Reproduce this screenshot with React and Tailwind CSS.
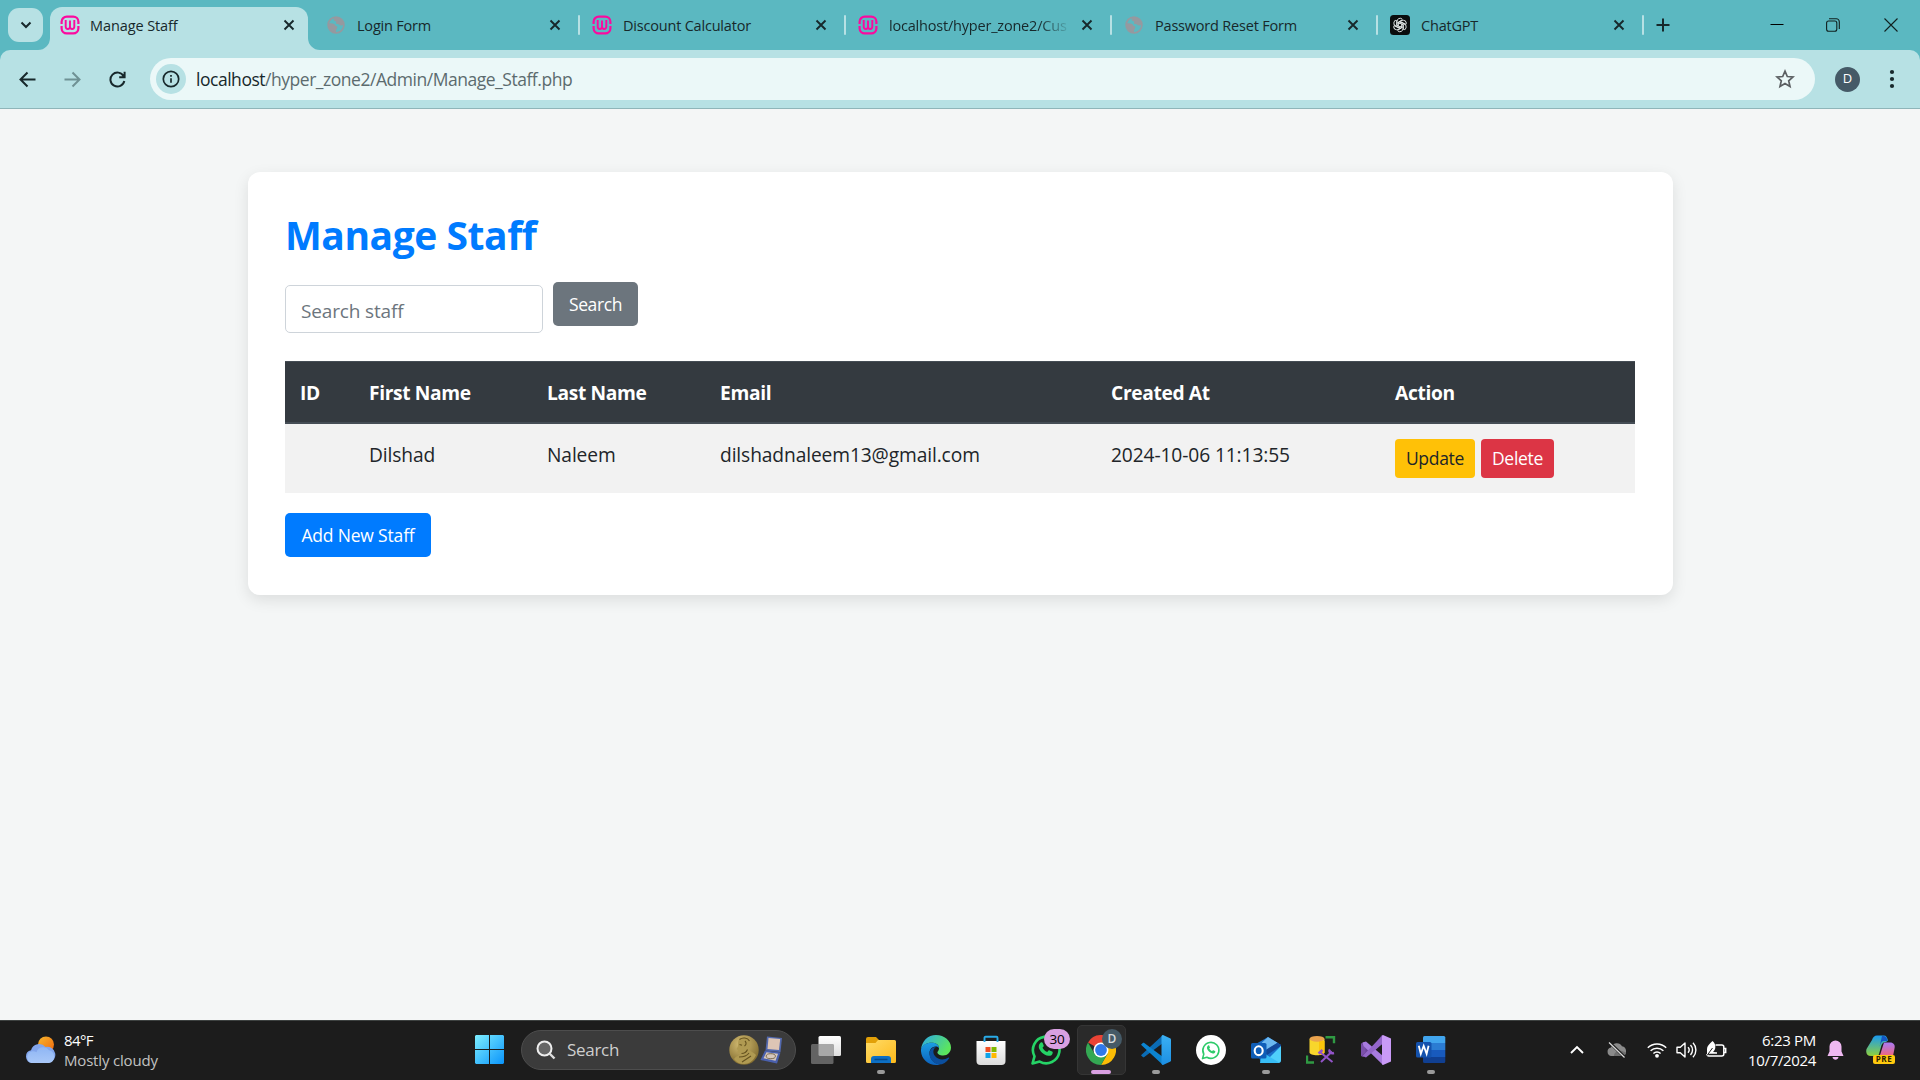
import React from "react";

const Wamp = () => (
  <svg width="20" height="20" viewBox="0 0 20 20" fill="none" stroke="#fb0a9f" className="shrink-0">
    <path d="M1.600 9V6.800A5.200 5.200 0 0 1 6.800 1.600h6.400a5.200 5.200 0 0 1 5.200 5.200V9M1.600 11v2.200a5.200 5.200 0 0 0 5.200 5.200h6.400a5.200 5.200 0 0 0 5.200-5.200V11" strokeWidth="2.200" />
    <path d="M5.700 5v6.800a2.150 2.150 0 0 0 4.300 0V5.500v6.300a2.150 2.150 0 0 0 4.300 0V5" strokeWidth="1.900" />
  </svg>
);

const Globe = () => (
  <svg width="20" height="20" viewBox="0 0 20 20" className="shrink-0">
    <circle cx="10" cy="10" r="7.900" fill="none" stroke="#96999f" strokeWidth="1.700" />
    <path d="M2.500 8.500c2-.3 4-.2 5.500.5 1.200.6.700 1.700 1.900 2 1.300.3 1.800 1.300 1.100 2.200-.7.800-1 1.800-1.100 4.300C5 17.300 1.800 13 2.500 8.500zM8 2.500c4.800-1 8.800 2 9.500 7-.7.900-2 1.200-3.300.7-1.100-.5-1.200-1.400-2.500-1.300-1.500.2-2-.6-1.600-1.500.3-.8-.3-1.200-1.300-1.400-1.200-.2-1.400-2.600-.8-3.500z" fill="#96999f" />
  </svg>
);

const Gpt = () => (
  <svg width="20" height="20" viewBox="0 0 20 20" className="shrink-0">
    <rect width="20" height="20" rx="3.500" fill="#0a0d0e" />
    <g fill="none" stroke="#e4e8e8" strokeWidth=".95" strokeLinejoin="round">
      {[0, 60, 120, 180, 240, 300].map((a) => (
        <path key={a} transform={`rotate(${a} 10 10)`} d="M7 11.200V6.400a3.100 3.100 0 0 1 5.300-2.200M8.300 11V7.200l4.100-2.400" />
      ))}
    </g>
  </svg>
);

const Close = () => (
  <svg width="12" height="12" viewBox="0 0 12 12" stroke="#17282b" strokeWidth="1.900" className="shrink-0">
    <path d="M1.500 1.500l9 9M10.500 1.500l-9 9" />
  </svg>
);

const tabs = [
  { t: "Login Form", I: Globe },
  { t: "Discount Calculator", I: Wamp },
  { t: "localhost/hyper_zone2/Cus", I: Wamp, fade: true },
  { t: "Password Reset Form", I: Globe },
  { t: "ChatGPT", I: Gpt },
];

function TabStrip() {
  return (
    <div className="flex h-[50px] bg-[#5bb8c1] text-[14.500px] tracking-[-0.200px] text-[#17282b]">
      <div className="ml-2 mt-2 flex h-[34px] w-[35px] shrink-0 items-center justify-center rounded-[11px] bg-[#b7e1e4]">
        <svg width="12" height="12" viewBox="0 0 12 12" fill="none" stroke="#17282b" strokeWidth="2">
          <path d="M1.500 3.500L6 8l4.500-4.500" />
        </svg>
      </div>
      <div className="relative ml-[7px] mt-[7px] flex h-[43px] w-[258px] shrink-0 items-center rounded-t-[12px] bg-[#b7e1e4] pb-[7px] pl-[10px] pr-[13px]">
        <svg className="absolute -left-3 bottom-0" width="12" height="12"><path d="M12 0v12H0A12 12 0 0 0 12 0z" fill="#b7e1e4" /></svg>
        <svg className="absolute -right-3 bottom-0" width="12" height="12"><path d="M0 0v12h12A12 12 0 0 1 0 0z" fill="#b7e1e4" /></svg>
        <Wamp />
        <span className="ml-[10px] flex-1 whitespace-nowrap pt-[2px] tracking-[-0.100px]">Manage Staff</span>
        <Close />
      </div>
      <div className="ml-[18px] flex">
        {tabs.map(({ t, I, fade }) => (
          <div key={t} className="flex h-[50px] w-[266px] shrink-0 items-center">
            <I />
            <div className={"ml-[11px] w-[180px] overflow-hidden whitespace-nowrap pt-[2px]" + (fade ? " [mask-image:linear-gradient(to_right,black_150px,transparent_182px)]" : "")}>{t}</div>
            <div className="ml-[12px] flex"><Close /></div>
            <div className="ml-[17px] h-5 w-[2px] rounded bg-[#b7e1e4]" />
          </div>
        ))}
      </div>
      <svg className="mt-[18px] shrink-0" width="14" height="14" viewBox="0 0 14 14" stroke="#17282b" strokeWidth="2"><path d="M7 .5v13M.5 7h13" /></svg>
      <div className="ml-auto mr-[22px] flex shrink-0 items-center">
        <svg className="mr-[42px]" width="14" height="14" viewBox="0 0 14 14" stroke="#000"><path d="M.5 6.500h13" /></svg>
        <svg className="mr-[44px]" width="14" height="14" viewBox="0 0 14 14" fill="none" stroke="#10201f" strokeWidth="1.100"><rect x=".6" y="3" width="10.200" height="10.300" rx="2" /><path d="M3 .8h7.300a3 3 0 0 1 3 3V11" /></svg>
        <svg width="14" height="14" viewBox="0 0 14 14" stroke="#10201f" strokeWidth="1.100"><path d="M.5.5l13 13M13.500.5l-13 13" /></svg>
      </div>
    </div>
  );
}

function Toolbar() {
  return (
    <div className="bg-[#5bb8c1]">
      <div className="flex h-[59px] items-center rounded-t-[10px] border-b border-[#8fb5b9] bg-[#b7e1e4]">
        <svg className="ml-[19px]" width="17" height="17" viewBox="0 0 17 17" fill="none" stroke="#17282b" strokeWidth="2"><path d="M16.500 8.500H2M8.500 1.500l-7 7 7 7" /></svg>
        <svg className="ml-[28px]" width="17" height="17" viewBox="0 0 17 17" fill="none" stroke="#6f9194" strokeWidth="2"><path d="M.5 8.500H15M8.500 1.500l7 7-7 7" /></svg>
        <svg className="ml-[28px]" width="17" height="17" viewBox="0 0 17 17" fill="none" stroke="#17282b" strokeWidth="2"><path d="M14.600 5.200A7 7 0 1 0 15.300 10M15.600.8v5.400h-5.400" /></svg>
        <div className="ml-[24px] flex h-[42px] w-[1665px] items-center rounded-full bg-[#ebf8f8] pl-[6px] pr-[20px]">
          <div className="flex size-[30px] items-center justify-center rounded-full bg-[#b7e1e4]">
            <svg width="18" height="18" viewBox="0 0 18 18" fill="none" stroke="#17282b" strokeWidth="1.700"><circle cx="9" cy="9" r="7.700" /><path d="M9 8.200v4.600M9 5v1.700" /></svg>
          </div>
          <span className="ml-[10px] flex-1 pt-px text-[17.500px] tracking-[-0.470px] text-[#5c6b6e]"><span className="text-[#17282b]">localhost</span>/hyper_zone2/Admin/Manage_Staff.php</span>
          <svg width="20" height="20" viewBox="0 0 20 20" fill="none" stroke="#5b5f62" strokeWidth="1.700"><path d="M10 2.200l2.300 5.300 5.700.5-4.300 3.800 1.300 5.600-5-3-5 3 1.300-5.600L2 8l5.700-.5z" /></svg>
        </div>
        <div className="ml-[20px] flex size-[25px] items-center justify-center rounded-full bg-[#455a67] text-[13px] text-white">D</div>
        <svg className="ml-[29px]" width="6" height="20" viewBox="0 0 6 20" fill="#17282b"><circle cx="3" cy="3" r="2.100" /><circle cx="3" cy="10" r="2.100" /><circle cx="3" cy="17" r="2.100" /></svg>
      </div>
    </div>
  );
}

function Content() {
  return (
    <main className="flex flex-1 justify-center bg-[#f4f6f6] pt-[63px] text-[#212529]">
      <div className="h-[423px] w-[1425px] rounded-[12px] bg-white px-[37.500px] pt-[37.500px] shadow-[0_5px_15px_rgba(0,0,0,0.1)]">
        <h2 className="text-[39px] font-bold leading-[50px] tracking-[-0.450px] text-[#007bff]">Manage Staff</h2>
        <div className="mt-[22px] flex h-[79px] items-start gap-[10px]">
          <input className="mt-[3px] h-[48px] w-[258px] rounded-[5px] border border-[#ced4da] px-[15px] pt-[5px] text-[19px] tracking-[-0.150px] placeholder:text-[#6c757d]" placeholder="Search staff" />
          <button className="h-[44px] w-[85px] rounded-[5px] bg-[#6c757d] pt-px text-[17.500px] tracking-[-0.400px] text-white">Search</button>
        </div>
        <table className="w-full table-fixed text-left text-[19.200px] tracking-[-0.110px]">
          <colgroup>
            <col className="w-[69px]" /><col className="w-[178px]" /><col className="w-[173px]" /><col className="w-[391px]" /><col className="w-[284px]" /><col />
          </colgroup>
          <thead>
            <tr className="h-[62px] border-t border-b-2 border-[#454d55] bg-[#343a40] tracking-[-0.350px] text-white">
              {["ID", "First Name", "Last Name", "Email", "Created At", "Action"].map((h) => (
                <th key={h} className="pl-[15px] pt-[3px] font-bold">{h}</th>
              ))}
            </tr>
          </thead>
          <tbody>
            <tr className="h-[70px] bg-[#f2f2f2] align-top">
              {["", "Dilshad", "Naleem", "dilshadnaleem13@gmail.com", "2024-10-06 11:13:55"].map((c, i) => (
                <td key={i} className="pl-[15px] pt-[17px]">{c}</td>
              ))}
              <td className="pl-[15px] pt-[15px]">
                <div className="flex gap-[6px] text-[17.500px] tracking-[-0.300px]">
                  <button className="h-[39px] w-[80px] rounded-[4px] bg-[#ffc107]">Update</button>
                  <button className="h-[39px] w-[73px] rounded-[4px] bg-[#dc3545] text-white">Delete</button>
                </div>
              </td>
            </tr>
          </tbody>
        </table>
        <button className="mt-[20px] h-[44px] w-[146px] rounded-[5px] bg-[#007bff] text-[17.500px] tracking-[-0.180px] text-white">Add New Staff</button>
      </div>
    </main>
  );
}

const Svg = ({ children, w = 30, h = 30 }) => (
  <svg width={w} height={h} viewBox={`0 0 ${w} ${h}`} fill="none" className="shrink-0">{children}</svg>
);

const Grad = ({ id, a, b, x2 = 0, y2 = 1 }) => (
  <linearGradient id={id} x1="0" y1="0" x2={x2} y2={y2}><stop stopColor={a} /><stop offset="1" stopColor={b} /></linearGradient>
);

const phone = "M9.700 7.600c.5-.6 1.500-.6 1.900.2l1.100 2.600c.2.500 0 1-.4 1.400l-.8.9c1 1.900 2.500 3.300 4.700 4.300l1.100-1.300c.4-.4.800-.5 1.300-.3l2.500 1.200c.6.300.7.700.6 1.300-.4 2-2.200 3.200-4.200 2.900-4.900-.9-9-4.700-9.700-8.600-.2-1.800.6-3.500 1.900-4.600z";

const TaskView = () => (
  <Svg>
    <defs><Grad id="tv" a="#ffffff" b="#dedede" /></defs>
    <rect x="7.500" y="1" width="22.500" height="20" rx="1.500" fill="url(#tv)" />
    <rect x="0" y="9" width="22.500" height="20" rx="1.500" fill="#636363" />
    <path d="M7.500 9h15v12H9a1.500 1.500 0 0 1-1.500-1.500z" fill="#a8a8a8" />
  </Svg>
);
const Explorer = () => (
  <Svg>
    <defs><Grad id="fe" a="#ffdc68" b="#fdb91a" x2={1} /></defs>
    <path d="M0 4a2 2 0 0 1 2-2h8l3 3v6H0z" fill="#e2a008" />
    <path d="M0 8h9.500L12 5h16.500A1.500 1.500 0 0 1 30 6.500v20a1.500 1.500 0 0 1-1.500 1.500h-27A1.500 1.500 0 0 1 0 26.500z" fill="url(#fe)" />
    <path d="M5 28v-4a3 3 0 0 1 3-3h14a3 3 0 0 1 3 3v4z" fill="#0d6fc4" />
    <path d="M8.500 24.500h13" stroke="#064a8a" strokeWidth="1.500" />
  </Svg>
);
const Edge = () => (
  <Svg>
    <defs>
      <Grad id="e1" a="#2aa8ec" b="#5ce65c" x2={1} y2={0.5} />
      <Grad id="e2" a="#1b9de2" b="#0c62bd" />
    </defs>
    <path d="M0 14.500C.8 6 7 0 15 0c8.500 0 15 6 15 12.500 0 4.600-3.500 8-7.800 8-3.600 0-5.800-1.600-5.800-3 0-1.200 1.600-1.700 1.600-4.300 0-3.600-3.600-5.400-7.500-5.400C5.500 7.800 1.500 10.500 0 14.500z" fill="url(#e1)" />
    <path d="M0 14.500c.9-4 5-6.700 10.500-6.700 4.200 0 7.500 2 7.500 5.200-.6-1-2-1.700-3.500-1.500-5 .5-7 5-5.500 9.500 1.300 4.500 5 8 10 8.400C17.500 30 16 30 15 30 6.500 30-.5 23 0 14.500z" fill="url(#e2)" />
    <path d="M15 12c-3 2-3.500 5.500-1 9 3 4 9 4.500 13.500 1.500.6-.3 1 .1.700.7C25.500 27.500 22 29.600 18 29.600c-5.500-1-9.500-5.600-9.500-10.600C8.500 15 11 12 15 12z" fill="#0b4f9e" />
  </Svg>
);
const Store = () => (
  <Svg>
    <defs><Grad id="st" a="#ffffff" b="#dcdcdc" /></defs>
    <path d="M.5 6h29v20a4 4 0 0 1-4 4h-21a4 4 0 0 1-4-4z" fill="url(#st)" />
    <path d="M8.500 7V2.800C8.500 2 9 1.800 9.500 1.800h11c.7 0 1 .3 1 1V7" stroke="#29abe8" strokeWidth="1.900" />
    <path d="M9.500 12h5v5h-5z" fill="#f04e23" /><path d="M15.500 12h5v5h-5z" fill="#7fba00" /><path d="M9.500 18h5v5h-5z" fill="#0fa3e8" /><path d="M15.500 18h5v5h-5z" fill="#ffb900" />
  </Svg>
);
const WhatsApp = () => (
  <div className="relative">
    <Svg>
      <path d="M1.500 28.500l2-7.200A13.300 13.300 0 1 1 8.700 26.600z" stroke="#25d366" strokeWidth="2.600" strokeLinejoin="round" />
      <path d={phone} fill="#25d366" />
    </Svg>
    <div className="absolute -top-[6px] left-[13px] flex h-[20px] w-[26px] items-center justify-center rounded-full bg-[#d9a0e2] text-[13.500px] tracking-[-0.300px] text-black">30</div>
  </div>
);
const Chrome = () => (
  <div className="relative flex">
    <Svg>
      <path d="M15 15L2 7.500A15 15 0 0 1 28 7.500H15z" fill="#ea4335" />
      <path d="M15 7.500h13A15 15 0 0 1 15 30l6.500-11.300z" fill="#fbbc05" />
      <path d="M2 7.500A15 15 0 0 0 15 30l6.500-11.300L15 15 8.500 18.700z" fill="#34a853" />
      <circle cx="15" cy="15" r="7.500" fill="#fff" /><circle cx="15" cy="15" r="5.900" fill="#3079ea" />
    </Svg>
    <div className="absolute -top-[6px] left-[16px] flex size-[20px] items-center justify-center rounded-full bg-[#455a67] text-[12px] font-semibold text-[#d5dade]">D</div>
  </div>
);
const VsCode = () => (
  <Svg>
    <defs><Grad id="vc" a="#3bb0f3" b="#1c8fe3" /></defs>
    <path d="M0 20.200L1.800 22c.4.400 1 .4 1.500 0L22 8V0z" fill="#0b6cb5" />
    <path d="M0 9.800L1.800 8c.4-.4 1-.4 1.500 0L22 22v8z" fill="#0c84d0" />
    <path d="M22 0l7 3.200c.6.300 1 .8 1 1.500v20.600c0 .7-.4 1.200-1 1.500L22 30c-1.200-.3-1.500-.8-1.500-2V2c0-1.200.3-1.700 1.500-2z" fill="url(#vc)" />
  </Svg>
);
const WhatsWeb = () => (
  <Svg>
    <circle cx="15" cy="15" r="15" fill="#fff" />
    <path d="M6.500 23.600l1.300-4.500a8 8 0 1 1 3.100 3.200z" stroke="#2ecb6a" strokeWidth="1.600" strokeLinejoin="round" />
    <path transform="translate(6.300 6) scale(.6)" d={phone} fill="#2ecb6a" />
  </Svg>
);
const Outlook = () => (
  <Svg>
    <path d="M4 9.500L17 2l13 8v15a3 3 0 0 1-3 3H10z" fill="#1a6fc9" />
    <path d="M17 2l9.500 5.700L13 17l-2-9.500z" fill="#6bb8f0" />
    <path d="M26.500 7.700L30 10v1L16 20l-3-4z" fill="#12489a" />
    <path d="M30 11v14a3 3 0 0 1-3 3H13z" fill="#4fd0fb" />
    <path d="M11 17l17 10.500c-.5.300-1 .5-1.500.5H9z" fill="#38bdf5" />
    <rect x="0" y="8" width="15.500" height="15.500" rx="1.600" fill="#0f5eb8" />
    <ellipse cx="7.700" cy="15.700" rx="4" ry="4.400" stroke="#fff" strokeWidth="2.100" />
  </Svg>
);
const Ssms = () => (
  <Svg>
    <path d="M19.500 2.200h8.500v6M1 20.500v7h7" stroke="#2f9a43" strokeWidth="2.400" />
    <path d="M3.500 4v13.500c0 1.600 3.300 2.700 7.500 2.700s7.500-1.100 7.500-2.700V4z" fill="#f8d62c" />
    <path d="M13 6h5.500v11.500c0 1.200-2 2.200-5.500 2.600z" fill="#fbc50a" />
    <ellipse cx="11" cy="3.800" rx="7.500" ry="2.900" fill="#eaa34e" />
    <path d="M15 27l11-10.500M14.500 17.500L26.500 27" stroke="#9254c8" strokeWidth="2" />
    <path d="M12.500 18.500l4-3.500M24 14.500c-1.500 2 .5 4.500 4 3.500" stroke="#9254c8" strokeWidth="2.400" />
  </Svg>
);
const Vs = () => (
  <Svg>
    <path d="M0 8.500L3.500 7 14 15.500 21 8V0L5 19.500c0 1-2 2-3 2.500L0 21z" fill="#6c4499" />
    <path d="M0 8.500l4.500 4v5L0 21z" fill="#7b50ab" />
    <path d="M1.500 7.500L5 6.500 22 21v9L2.500 11z" fill="#a87be0" />
    <path d="M5 22.500L22 8.500V0L1.500 21z" fill="#9366c9" />
    <path d="M22 0l8 3.500v23L22 30c-.7-.2-1-.7-1-1.500v-27C21 .6 21.300.2 22 0z" fill="#c99af7" />
  </Svg>
);
const Word = () => (
  <Svg>
    <path d="M7 2.500A1.500 1.500 0 0 1 8.500 1h19.300A1.500 1.500 0 0 1 29.300 2.500V8H7z" fill="#41a5ee" />
    <path d="M7 8h22.300v7H7z" fill="#2b7cd3" /><path d="M7 15h22.300v7H7z" fill="#185abd" />
    <path d="M7 22h22.300v4.500a1.500 1.500 0 0 1-1.500 1.500H8.500A1.500 1.500 0 0 1 7 26.500z" fill="#103f91" />
    <rect x="0" y="7" width="15.500" height="15.500" rx="1.500" fill="#1452ad" />
    <path d="M2.800 10.800l2 8 2.900-8 2.900 8 2-8" stroke="#fff" strokeWidth="1.800" />
  </Svg>
);

const apps = [
  { I: TaskView }, { I: Explorer, run: true }, { I: Edge }, { I: Store }, { I: WhatsApp },
  { I: Chrome, active: true }, { I: VsCode, run: true }, { I: WhatsWeb }, { I: Outlook, run: true },
  { I: Ssms }, { I: Vs }, { I: Word, run: true },
];

function Taskbar() {
  return (
    <div className="flex h-[60px] items-center border-t border-[#3d4140] bg-[#1c1c1c] pb-[2px] text-[15px] leading-[20px] text-white">
      <div className="flex w-[475px] shrink-0 items-center pl-[25px]">
        <Svg w={31} h={27}>
          <defs><Grad id="sun" a="#f5b82e" b="#f2660d" x2={1} /><Grad id="cl" a="#8fb6f4" b="#a9c8f8" /></defs>
          <circle cx="21" cy="8.500" r="8" fill="url(#sun)" />
          <path d="M7 27a6.500 6.500 0 0 1-1-12.800A8.500 8.500 0 0 1 20.500 11 8 8 0 0 1 24 26.800z" fill="#83a6ec" />
          <path d="M6.500 27a6 6 0 0 1 0-11.500c2-.5 3.500-.2 5 .8a7 7 0 0 1 12.500-2A6.500 6.500 0 0 1 24 27z" fill="url(#cl)" />
        </Svg>
        <div className="ml-2">
          <div className="tracking-[-0.600px]">84°F</div>
          <div className="tracking-[-0.180px] text-[#c2c2c2]">Mostly cloudy</div>
        </div>
      </div>
      <Svg w={29} h={29}>
        <defs><linearGradient id="win" gradientUnits="userSpaceOnUse" x1="0" y1="0" x2="29" y2="29"><stop stopColor="#7deeff" /><stop offset="1" stopColor="#0a94fb" /></linearGradient></defs>
        <path d="M1 0h13v14H0V1zM15 0h13l1 1v13H15zM0 15h14v14H1l-1-1zM15 15h14v13l-1 1H15z" fill="url(#win)" />
      </Svg>
      <div className="ml-[17px] flex h-[40px] w-[275px] shrink-0 items-center rounded-full border border-[#4d4d4d] bg-[#3b3b3b] pl-[14px] pr-[11px]">
        <Svg w={20} h={20}><circle cx="8.500" cy="8.500" r="7" fill="#666" stroke="#eee" strokeWidth="2" /><path d="M13.500 13.500l5 5" stroke="#ddd" strokeWidth="2.400" /></Svg>
        <span className="ml-[11px] flex-1 pt-px text-[17px] tracking-[-0.300px] text-[#cfcfcf]">Search</span>
        <Svg>
          <defs><radialGradient id="med" cx=".4" cy=".3" r=".75"><stop stopColor="#d7c076" /><stop offset="1" stopColor="#7d672b" /></radialGradient></defs>
          <circle cx="15" cy="15" r="14.700" fill="url(#med)" />
          <path d="M10 4.500c3-3 9-2.500 11 1.500 1.500 3.500-.5 6.500-1 9 2 1.500 5 2.500 7 5-2.500 6-7 9-12 9-4.500 0-8-2-10-5 1.500-2.500 5-4 7.500-5.500-1.500-.5-3.500.3-4-1l.3-2.500-1.300-.7L9 11c.2-2.200-.3-4.500 1-6.500z" fill="#b09a52" />
          <path d="M10.500 4.500c3-2.500 8-2 10 1.500M16 6c2 2 1 4-.5 5M12.500 18.500c3 0 5-1.500 6-4M10 22c4 0 8-1 10-4M13 27l9-6M10.500 9.500l2.500.7" stroke="#65521f" strokeWidth="1.100" />
        </Svg>
        <div className="ml-px flex"><Svg w={24} h={30}>
          <path d="M7 1.500L22 3l-1.500 14L5.500 15.500z" fill="#5369ae" /><path d="M8.500 3l11.700 1-1.200 11-11.500-1z" fill="#ddc5b5" />
          <path d="M5 15.500l15.500 2L17 28.500.5 25z" fill="#4a60ad" /><path d="M6.500 17.300l11.500 1.500-2.500 7L3.500 23.300z" fill="#d6c8be" />
          <ellipse cx="10.800" cy="21.200" rx="4.600" ry="2.500" stroke="#7b6a50" />
        </Svg></div>
      </div>
      <div className="ml-[2.500px] flex shrink-0">
        {apps.map(({ I, run, active }, i) => (
          <div key={i} className="relative flex h-[57px] w-[55px] items-center justify-center">
            {active && <div className="absolute left-[3px] top-[4px] h-[50px] w-[49px] rounded-[5px] border border-[#353535] bg-[#2a2a2a]" />}
            <div className="relative flex"><I /></div>
            {run && <div className="absolute bottom-[4px] h-[4px] w-[8px] rounded-full bg-[#9a9a9a]" />}
            {active && <div className="absolute bottom-[4px] h-[4px] w-[20px] rounded-full bg-[#d9a0e2]" />}
          </div>
        ))}
      </div>
      <div className="ml-auto flex shrink-0 items-center pr-[24px]">
        <Svg w={14} h={10}><path d="M1 8l6-6 6 6" stroke="#fff" strokeWidth="1.900" /></Svg>
        <div className="ml-[23px] flex"><Svg w={20} h={18}><path d="M4.500 15a4.300 4.300 0 0 1-.5-8.500 6 6 0 0 1 11-1.200A5 5 0 0 1 15.500 15z" fill="#8a8a8a" /><path d="M7 15c0-4 4-6 8-5l4 1.500a4 4 0 0 1-3.500 3.500z" fill="#6e6e6e" /><path d="M2.500 1.500l15.500 15" stroke="#1c1c1c" strokeWidth="3" /><path d="M2 1.500l15.500 15" stroke="#ddd" strokeWidth="1.200" /></Svg></div>
        <div className="ml-[20px] flex"><Svg w={20} h={16}><path d="M.8 5.700a13 13 0 0 1 18.400 0M3.600 8.800a9 9 0 0 1 12.800 0M6.400 11.600a5 5 0 0 1 7.200 0" stroke="#fff" strokeWidth="1.500" /><circle cx="10" cy="13.800" r="1.900" fill="#fff" /></Svg></div>
        <div className="ml-[9px] flex"><Svg w={21} h={18}><path d="M1 6.300h3.300L9 2v14l-4.700-4.300H1z" stroke="#fff" strokeWidth="1.400" strokeLinejoin="round" /><path d="M12 6.300a4 4 0 0 1 0 5.400M14.500 4a7.200 7.200 0 0 1 0 10M17 1.800a10.400 10.400 0 0 1 0 14.400" stroke="#fff" strokeWidth="1.400" /></Svg></div>
        <div className="ml-[9px] flex"><Svg w={21} h={18}><path d="M9.500 4h6.300a2 2 0 0 1 2 2v7a2 2 0 0 1-2 2H3a2 2 0 0 1-2-2M18.500 7.500h1.200v4h-1.200" stroke="#fff" strokeWidth="1.500" /><path d="M6.500 0c4 3 3.500 9 .5 11l4 .2v1.500H3.500L1 14V8c0-3 2-4.500 5.500-8z" fill="#fff" /><path d="M1 14.500L6.500 7" stroke="#1c1c1c" /></Svg></div>
        <div className="ml-[19px] w-[70px] whitespace-nowrap text-right tracking-[-0.300px]">
          <div>6:23 PM</div><div className="tracking-[-0.350px]">10/7/2024</div>
        </div>
        <div className="ml-[11px] flex"><Svg w={17} h={20}><path d="M8.500.5a6 6 0 0 1 6 6v5l2 4.500H.5l2-4.500v-5a6 6 0 0 1 6-6zM5.500 17h6c-.5 3.500-5.500 3.500-6 0z" fill="#efb8f1" /></Svg></div>
        <div className="relative ml-[22px] flex"><Svg>
          <defs><Grad id="c1" a="#1a9af0" b="#8fd13c" /><Grad id="c2" a="#a97af5" b="#f0667c" /></defs>
          <path d="M6 5c1-3 2.500-4.500 5-4.500h7c2 0 3 1.500 4 5L20 7c-3 0-4 1.500-5 5l-2 7c-.5 1.500-1.500 2-3 2H5c-4 0-5.500-3-4.500-7z" fill="url(#c1)" />
          <path d="M17 1c2.500 0 4 1.500 4.500 5h-4c-2 0-3 3-4 6L16 1z" fill="#1457c4" />
          <path d="M18 7.500h6c3.500 0 5.500 2.500 4.500 6L27 21H12c2 0 2.500-2 3-4z" fill="url(#c2)" />
        </Svg>
          <div className="absolute left-[7px] top-[20px] flex h-[9px] w-[22px] items-center justify-center rounded-[2px] bg-[#ffc90e] text-[8px] font-bold leading-none tracking-[0.500px] text-[#2a2200]">PRE</div>
        </div>
      </div>
    </div>
  );
}

export default function App() {
  return (
    <div className="flex h-[1080px] w-[1920px] flex-col overflow-hidden font-['Open_Sans','Noto_Sans',sans-serif]">
      <TabStrip />
      <Toolbar />
      <Content />
      <Taskbar />
    </div>
  );
}
